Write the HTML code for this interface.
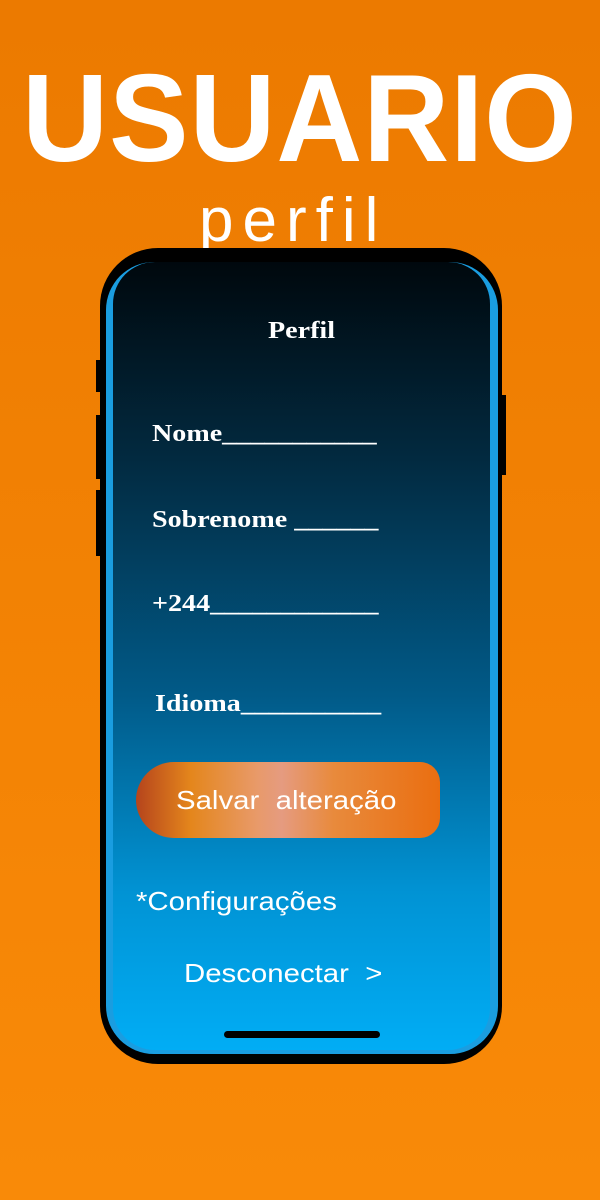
<!DOCTYPE html>
<html><head><meta charset="utf-8"><style>
html,body{margin:0;padding:0}
body{width:600px;height:1200px;position:relative;overflow:hidden;background:linear-gradient(#ec7a00,#f98a08);font-family:"Liberation Sans",sans-serif}
.t{position:absolute;color:#fff;white-space:nowrap}
#title{left:0;width:600px;text-align:center;top:54px;font-size:124px;font-weight:bold;line-height:130px;transform:scaleX(0.96);letter-spacing:1px}
#sub{left:199px;top:186px;font-size:62px;line-height:70px;letter-spacing:9px;font-weight:normal}
.btn{position:absolute;background:#000}
#phone{position:absolute;left:100px;top:248px;width:402px;height:816px;background:#000;border-radius:58px}
#blue{position:absolute;left:106px;top:262px;width:392px;height:792px;border-radius:48px;background:#1a9de0}
#screen{position:absolute;left:113px;top:262px;width:377px;height:788px;border-radius:42px;background:linear-gradient(#00080d 0%,#022a40 25%,#015a88 55%,#0193d4 80%,#01adf5 100%);overflow:hidden}
.s{position:absolute;color:#fff;font-family:"Liberation Serif",serif;font-weight:bold;font-size:24px;white-space:nowrap;transform:scaleX(1.17);transform-origin:left}
.g{position:absolute;color:#fff;font-size:26px;white-space:nowrap;transform:scaleX(1.13);transform-origin:left}
#save{position:absolute;left:23px;top:500px;width:304px;height:76px;border-radius:38px 20px 20px 38px;background:linear-gradient(90deg,#b5441c 0%,#e4861c 18%,#e89a6a 40%,#e59b80 48%,#e88a3c 65%,#ea6e10 100%)}
</style></head><body>
<div class="t" id="title">USUARIO</div>
<div class="t" id="sub">perfil</div>
<div class="btn" style="left:96px;top:360px;width:6px;height:32px"></div>
<div class="btn" style="left:96px;top:415px;width:6px;height:64px"></div>
<div class="btn" style="left:96px;top:490px;width:6px;height:66px"></div>
<div class="btn" style="left:500px;top:395px;width:6px;height:80px"></div>
<div id="phone"></div>
<div id="blue"></div>
<div id="screen">
 <div class="s" style="left:155px;top:56px">Perfil</div>
 <div class="s" style="left:39px;top:159px">Nome___________</div>
 <div class="s" style="left:39px;top:245px">Sobrenome ______</div>
 <div class="s" style="left:39px;top:329px">+244____________</div>
 <div class="s" style="left:42px;top:429px">Idioma__________</div>
 <div id="save"></div>
 <div class="g" style="left:63px;top:523px">Salvar&nbsp; alteração</div>
 <div class="g" style="left:23px;top:624px">*Configurações</div>
 <div class="g" style="left:71px;top:696px">Desconectar&nbsp; &gt;</div>
 <div style="position:absolute;left:111px;top:769px;width:156px;height:7px;border-radius:4px;background:#000"></div>
</div>
</body></html>
